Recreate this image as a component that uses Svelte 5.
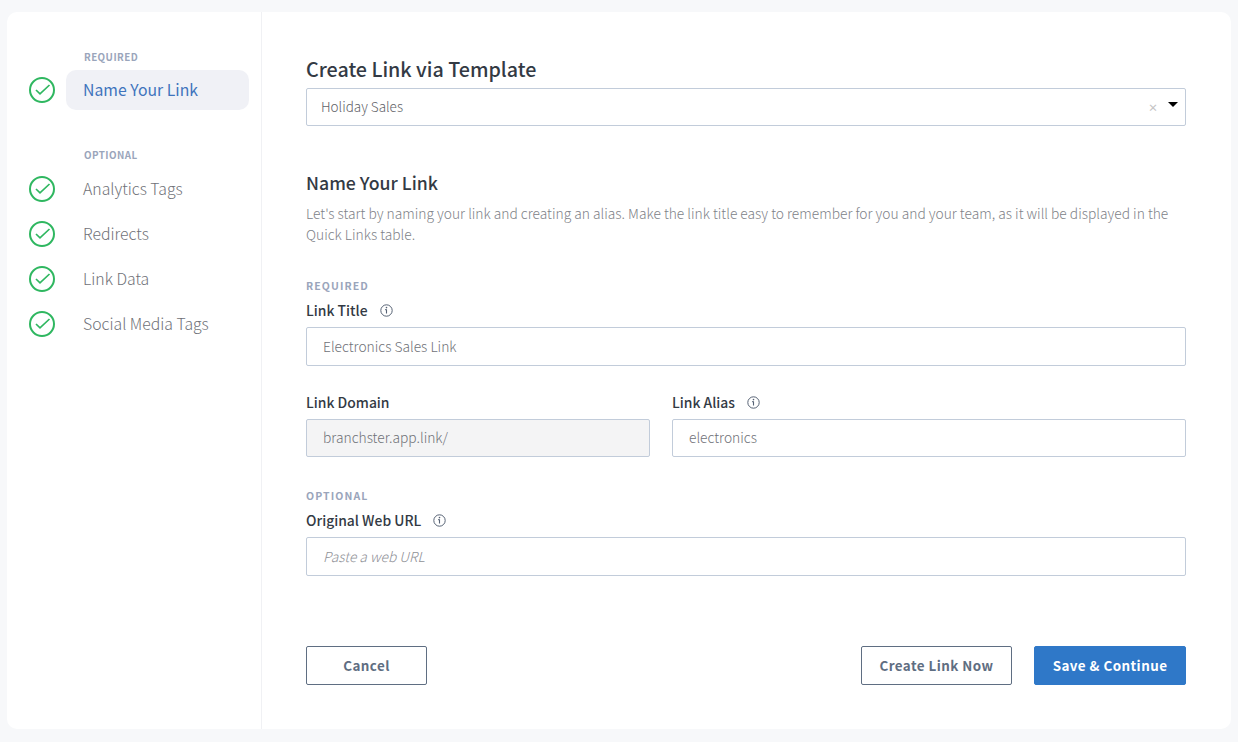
<script>
  const optional = ['Analytics Tags', 'Redirects', 'Link Data', 'Social Media Tags'];
</script>

{#snippet check()}
  <svg class="check" width="26" height="26" viewBox="0 0 26 26" fill="none">
    <circle cx="13" cy="13" r="12" stroke="#2fb760" stroke-width="2" />
    <path d="M7 13 L11 16.8 L20.5 8" stroke="#2fb760" stroke-width="1.7" />
  </svg>
{/snippet}

{#snippet info()}
  <svg class="info" width="13" height="13" viewBox="0 0 13 13" fill="none">
    <circle cx="6.5" cy="6.5" r="5.7" stroke="#566274" stroke-width="1" />
    <path d="M6.5 5.6 V9.6 M5.2 5.6 H6.5" stroke="#566274" stroke-width="1.1" />
    <circle cx="6.5" cy="3.6" r="0.8" fill="#566274" />
  </svg>
{/snippet}

<div class="page">
  <div class="card">
    <aside class="side">
      <div class="tag first">REQUIRED</div>
      <div class="step">
        {@render check()}
        <div class="pill">Name Your Link</div>
      </div>
      <div class="tag second">OPTIONAL</div>
      {#each optional as item}
        <div class="step plain">
          {@render check()}
          <div class="item">{item}</div>
        </div>
      {/each}
    </aside>
    <main class="main">
      <h1>Create Link via Template</h1>
      <div class="select">
        <span>Holiday Sales</span>
        <span class="x">×</span>
        <span class="caret"></span>
      </div>
      <h2>Name Your Link</h2>
      <p>Let's start by naming your link and creating an alias. Make the link title easy to remember for you and your team, as it will be displayed in the Quick Links table.</p>
      <div class="eyebrow req">REQUIRED</div>
      <div class="label">Link Title {@render info()}</div>
      <div class="input">Electronics Sales Link</div>
      <div class="row">
        <div class="col domain">
          <div class="label">Link Domain</div>
          <div class="input short disabled">branchster.app.link/</div>
        </div>
        <div class="col alias">
          <div class="label">Link Alias {@render info()}</div>
          <div class="input short">electronics</div>
        </div>
      </div>
      <div class="eyebrow opt">OPTIONAL</div>
      <div class="label">Original Web URL {@render info()}</div>
      <div class="input ph">Paste a web URL</div>
      <div class="actions">
        <button class="btn cancel">Cancel</button>
        <button class="btn now">Create Link Now</button>
        <button class="btn save">Save &amp; Continue</button>
      </div>
    </main>
  </div>
</div>

<style>
  :global(body) { margin: 0; background: #f7f8fa; }
  .page {
    width: 1238px; height: 742px; box-sizing: border-box;
    padding: 12px 7px 13px;
    font-family: "Noto Sans CJK SC", "Noto Sans", sans-serif;
    overflow: hidden;
  }
  .card { display: flex; height: 717px; background: #fff; border-radius: 10px; }
  .side { width: 255px; box-sizing: border-box; border-right: 1px solid #f0f1f4; padding-left: 22px; }
  .tag { margin-left: 55px; font-size: 9.8px; line-height: 14px; font-weight: 700; letter-spacing: .45px; color: #9aa5bb; }
  .tag.first { margin-top: 38px; margin-bottom: 6px; }
  .tag.second { margin-top: 38px; margin-bottom: 4px; }
  .step { display: flex; align-items: center; gap: 11px; height: 40px; width: 220px; }
  .step.plain { height: 45px; }
  .check { flex: none; }
  .pill { width: 183px; height: 40px; box-sizing: border-box; padding-left: 17px; line-height: 40px; background: #f0f1f6; border-radius: 10px; font-size: 15.8px; font-weight: 400; color: #3f74bd; }
  .item { padding-left: 17px; font-size: 15.8px; line-height: 25px; font-weight: 300; color: #6f7177; white-space: nowrap; }
  .main { width: 880px; margin-left: 44px; position: relative; }
  h1 { margin: 43px 0 0; font-size: 19.7px; line-height: 28px; font-weight: 500; color: #333a44; }
  .select { margin-top: 5px; height: 38px; box-sizing: border-box; border: 1px solid #c2ccda; border-radius: 2px; display: flex; align-items: center; padding-left: 14px; padding-bottom: 3px; font-size: 13.5px; font-weight: 300; color: #5f6268; }
  .select .x { margin-left: auto; margin-right: 10px; font-size: 10px; font-weight: 700; color: #c4c4c4; line-height: 14px; padding-top: 4px; }
  .caret { width: 0; height: 0; border-left: 5.5px solid transparent; border-right: 5.5px solid transparent; border-top: 5px solid #000; margin-right: 7px; margin-bottom: 3px; }
  h2 { margin: 44px 0 0; font-size: 17.7px; line-height: 24px; font-weight: 500; color: #333a44; }
  p { margin: 9px 0 0; font-size: 13.8px; line-height: 21px; font-weight: 300; color: #808288; }
  .eyebrow { font-size: 10.5px; line-height: 14px; font-weight: 700; letter-spacing: 1.1px; color: #9aa5bb; }
  .eyebrow.req { margin-top: 34px; }
  .eyebrow.opt { margin-top: 32px; }
  .label { margin-top: 7px; font-size: 13.9px; line-height: 20px; font-weight: 500; color: #333a44; display: flex; align-items: center; gap: 12px; }
  .input { margin-top: 7px; height: 39px; box-sizing: border-box; border: 1px solid #c2ccda; border-radius: 2px; padding-left: 16px; font-size: 13.8px; font-weight: 300; line-height: 37px; color: #6f7177; }
  .input.short { height: 38px; line-height: 35px; }
  .input.disabled { background: #f4f4f5; }
  .input.ph { font-style: italic; color: #8f9197; }
  .row { display: flex; gap: 22px; margin-top: 26px; }
  .row .label { margin-top: 0; }
  .domain { width: 344px; }
  .alias { width: 514px; }
  .actions { display: flex; margin-top: 70px; }
  .btn { height: 39px; box-sizing: border-box; border-radius: 2px; font-family: inherit; font-size: 13.4px; font-weight: 700; letter-spacing: .45px; background: #fff; color: #5f6e82; border: 1px solid #5f6e82; padding: 0 0 2px; }
  .cancel { width: 121px; margin-right: auto; }
  .now { width: 151px; margin-right: 22px; }
  .save { width: 152px; background: #2f78c8; border-color: #2f78c8; color: #fff; }
</style>
